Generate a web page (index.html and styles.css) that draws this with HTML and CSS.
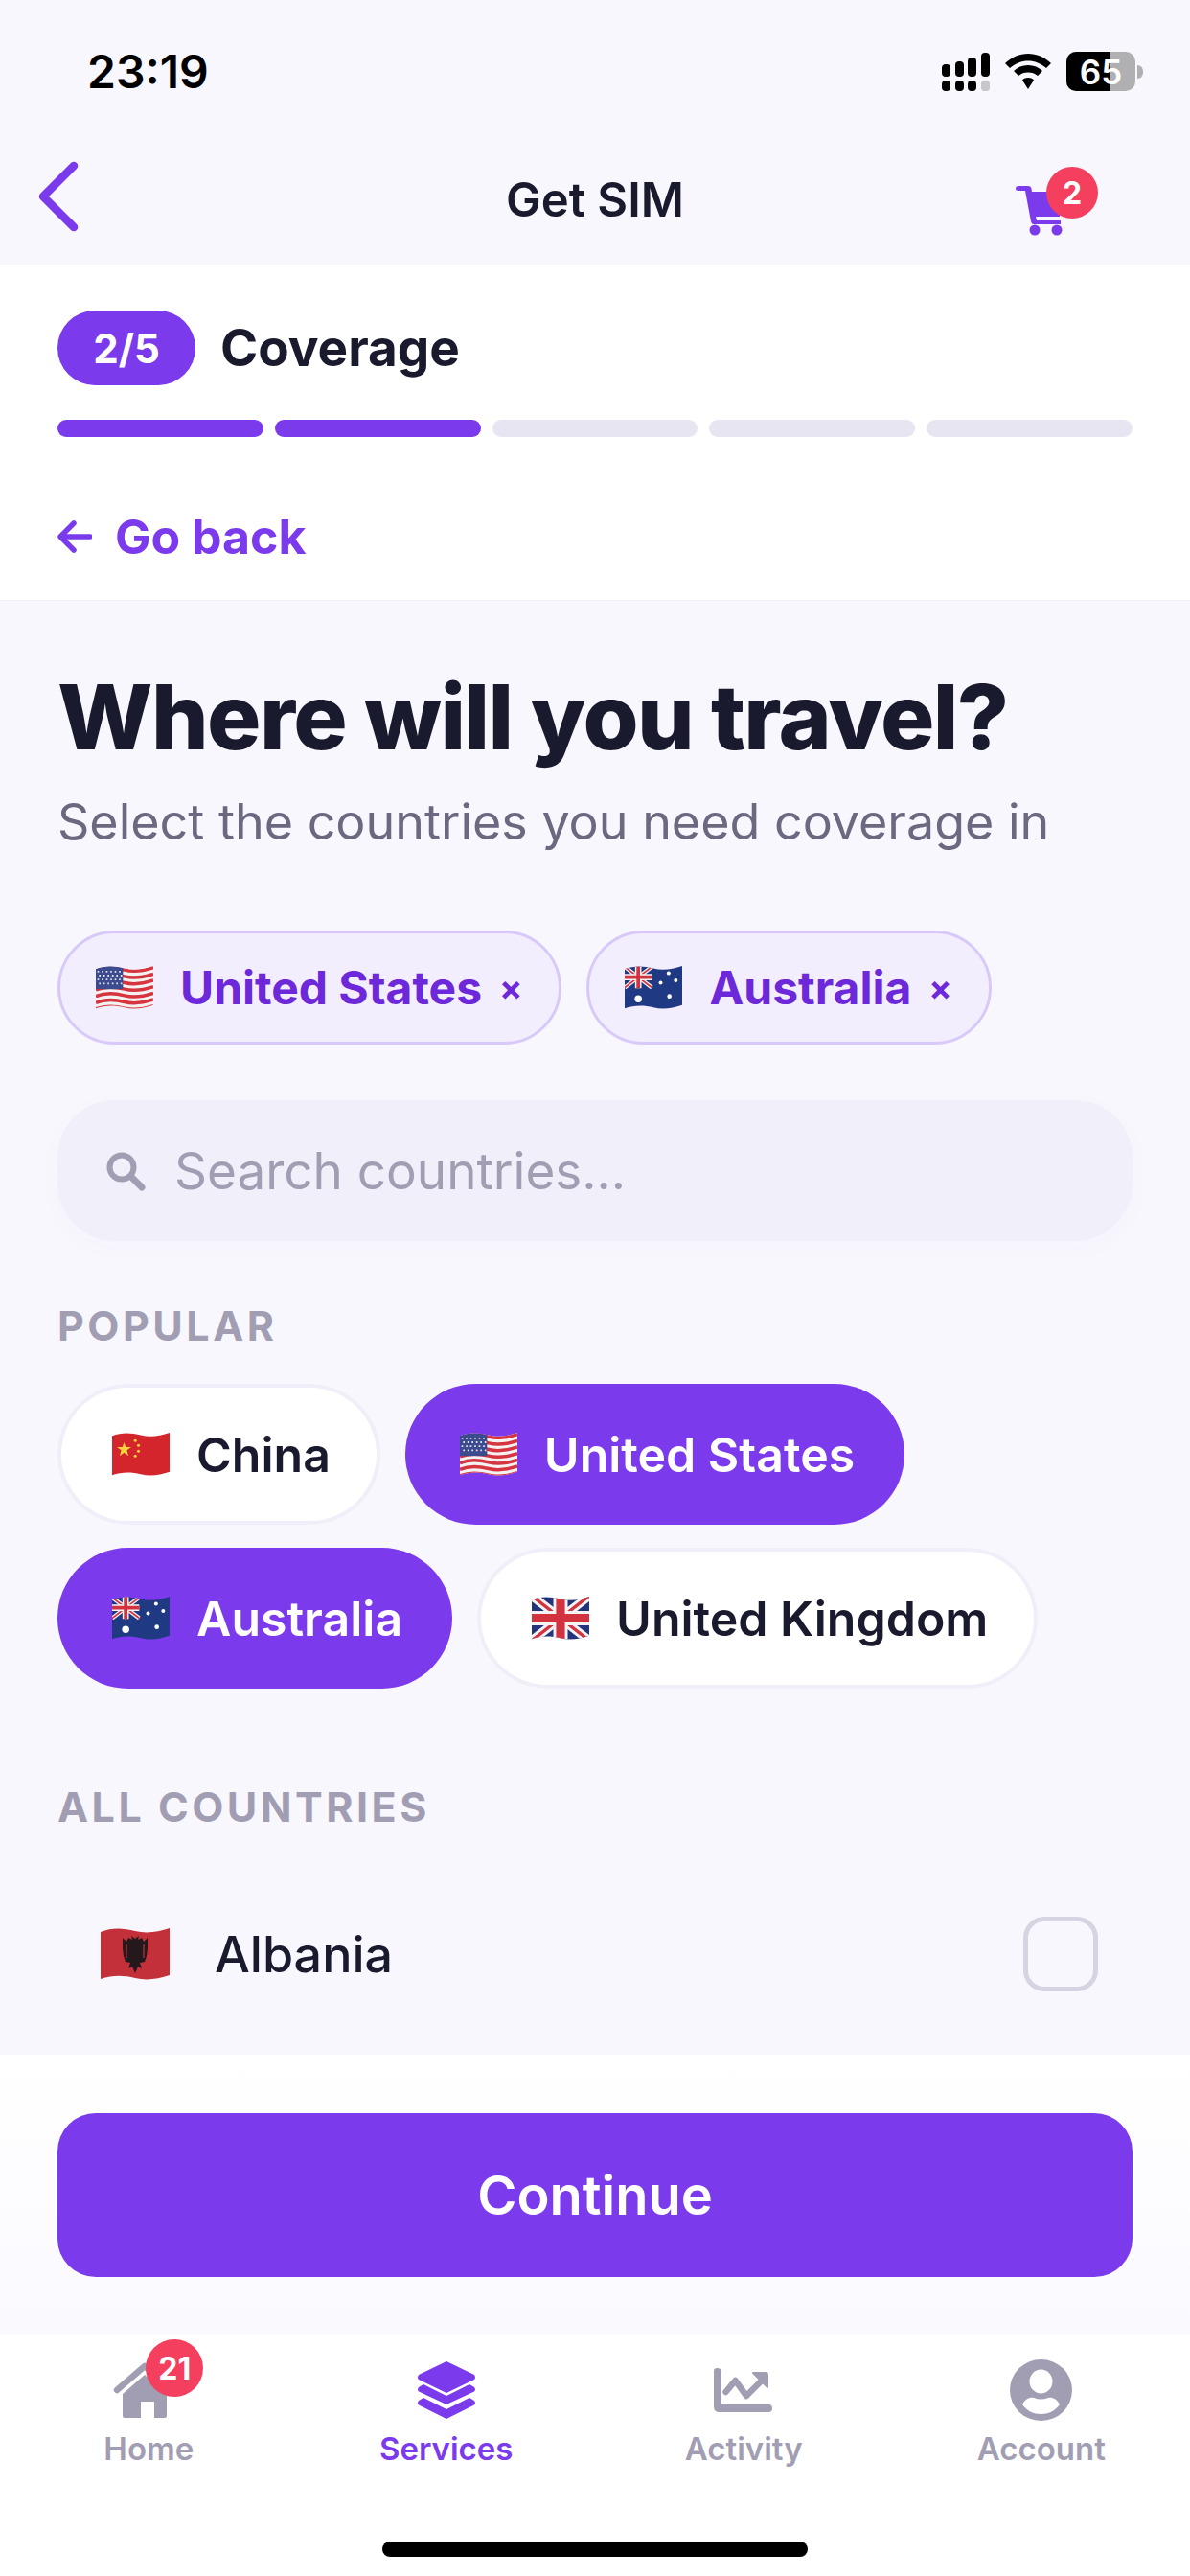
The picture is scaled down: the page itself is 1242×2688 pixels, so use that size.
FILE: index.html
```html
<!DOCTYPE html>
<html lang="en">

<head>
  <meta charset="UTF-8">
  <meta name="viewport" content="width=device-width, initial-scale=1.0">
  <title>Get SIM</title>
  <link rel="stylesheet" href="styles.css">
</head>

<body>
  <svg class="defs" width="0" height="0">
    <defs>
      <clipPath id="wave">
        <path d="M0 5 C12 0 24 1 36 4 C48 7 60 5 72 1 L72 50 C60 54 48 56 36 53 C24 50 12 50 0 54 Z"/>
      </clipPath>
      <symbol id="flag-us" viewBox="0 0 72 56">
        <g clip-path="url(#wave)">
          <rect width="72" height="56" fill="#f4f1f1"/>
          <g fill="none" stroke="#d6343f" stroke-width="4.2">
            <path d="M0 7 C12 2 24 3 36 6 C48 9 60 7 72 3"/>
            <path d="M0 15 C12 10 24 11 36 14 C48 17 60 15 72 11"/>
            <path d="M0 23 C12 18 24 19 36 22 C48 25 60 23 72 19"/>
            <path d="M0 31 C12 26 24 27 36 30 C48 33 60 31 72 27"/>
            <path d="M0 39 C12 34 24 35 36 38 C48 41 60 39 72 35"/>
            <path d="M0 47 C12 42 24 43 36 46 C48 49 60 47 72 43"/>
            <path d="M0 55 C12 50 24 51 36 54 C48 57 60 55 72 51"/>
          </g>
          <rect width="34" height="30" fill="#3c4a8e"/>
          <g fill="none" stroke="#dfe2f2" stroke-width="2.2" stroke-dasharray="2 3.4">
            <path d="M2 8 H33"/><path d="M4 13 H33"/><path d="M2 18 H33"/><path d="M4 23 H33"/>
          </g>
        </g>
      </symbol>
      <symbol id="flag-au" viewBox="0 0 72 56">
        <g clip-path="url(#wave)">
          <rect width="72" height="56" fill="#1f3a82"/>
          <g stroke="#f3f3f3" stroke-width="5">
            <path d="M0 2 L34 28"/><path d="M34 2 L0 28"/>
          </g>
          <g stroke="#d3323f" stroke-width="2">
            <path d="M0 2 L34 28"/><path d="M34 2 L0 28"/>
          </g>
          <path d="M17 0 V29 M0 15 H34" stroke="#f3f3f3" stroke-width="8"/>
          <path d="M17 0 V29 M0 15 H34" stroke="#d3323f" stroke-width="4.5"/>
          <g fill="#fff">
            <circle cx="17" cy="42" r="4.5"/>
            <circle cx="55" cy="10" r="2.4"/>
            <circle cx="45" cy="22" r="2.4"/>
            <circle cx="64" cy="19" r="2.4"/>
            <circle cx="56" cy="39" r="2.8"/>
          </g>
        </g>
      </symbol>
      <symbol id="flag-cn" viewBox="0 0 72 56">
        <g clip-path="url(#wave)">
          <rect width="72" height="56" fill="#d4252c"/>
          <g fill="#f6d53c">
            <path d="M15 13 L17 19 L24 19 L18.500 23 L20.500 30 L15 26 L9.500 30 L11.500 23 L6 19 L13 19 Z"/>
            <circle cx="29" cy="11" r="1.800"/>
            <circle cx="33" cy="17" r="1.800"/>
            <circle cx="33" cy="24" r="1.800"/>
            <circle cx="29" cy="30" r="1.800"/>
          </g>
        </g>
      </symbol>
      <symbol id="flag-gb" viewBox="0 0 72 56">
        <g clip-path="url(#wave)">
          <rect width="72" height="56" fill="#23337c"/>
          <path d="M0 0 L72 56 M72 0 L0 56" stroke="#f3f3f3" stroke-width="11"/>
          <path d="M0 0 L72 56 M72 0 L0 56" stroke="#d3323f" stroke-width="4"/>
          <path d="M36 0 V56 M0 28 H72" stroke="#f3f3f3" stroke-width="18"/>
          <path d="M36 0 V56 M0 28 H72" stroke="#d3323f" stroke-width="11"/>
        </g>
      </symbol>
      <symbol id="flag-al" viewBox="0 0 72 56">
        <g clip-path="url(#wave)">
          <rect width="72" height="56" fill="#c3303a"/>
          <path d="M36 48 L33 41 L29 43 L31 37 L26 36 L24 30 L23 22 L23 11 L27 15 L29 11 L33 13 L32 9 L36 12 L40 9 L39 13 L43 11 L45 15 L49 11 L49 22 L48 30 L46 36 L41 37 L43 43 L39 41 Z" fill="#23191c"/>
          <path d="M27 18 V32 M45 18 V32" stroke="#c3303a" stroke-width="1.2"/>
        </g>
      </symbol>
    </defs>
  </svg>

  <div class="phone">
    <div class="statusbar">
      <span class="clock">23:19</span>
      <div class="status-icons">
        <svg width="50" height="40" viewBox="0 0 50 40">
          <g fill="#000">
            <rect x="0" y="12" width="9" height="13" rx="4"/>
            <rect x="14" y="9" width="9" height="16" rx="4"/>
            <rect x="27" y="5" width="9" height="20" rx="4"/>
            <rect x="41" y="0" width="9" height="25" rx="4"/>
            <rect x="0" y="29" width="9" height="11" rx="4"/>
            <rect x="14" y="29" width="9" height="11" rx="4"/>
            <rect x="27" y="29" width="9" height="11" rx="4"/>
          </g>
          <rect x="41" y="29" width="9" height="11" rx="3.5" fill="#c8c8cc"/>
        </svg>
        <svg width="48" height="38" viewBox="0 0 48 38">
          <path d="M24 0 C33 0 41 3.500 48 10 L43 15 C37 10 31 7.500 24 7.500 C17 7.500 11 10 5 15 L0 10 C7 3.500 15 0 24 0 Z" fill="#000"/>
          <path d="M24 12 C30 12 35 14 39 18 L34 23 C31 20.500 28 19.500 24 19.500 C20 19.500 17 20.500 14 23 L9 18 C13 14 18 12 24 12 Z" fill="#000"/>
          <path d="M24 25 C27 25 29 26 30 27.500 L24 37 L18 27.500 C19 26 21 25 24 25 Z" fill="#000"/>
        </svg>
        <div class="battery">
          <div class="battery-body">
            <div class="battery-fill"></div>
            <span class="battery-num">65</span>
          </div>
          <div class="battery-tip"></div>
        </div>
      </div>
    </div>

    <div class="navbar">
      <svg class="nav-back" width="42" height="74" viewBox="0 0 42 74">
        <path d="M37 5 L5 37 L37 69" fill="none" stroke="#7c3aed" stroke-width="8.500" stroke-linecap="round" stroke-linejoin="round"/>
      </svg>
      <span class="nav-title">Get SIM</span>
      <div class="cart">
        <svg width="56" height="54" viewBox="0 0 56 54">
          <path d="M3 2 H13 Q16 2 16.500 5 L17 8 H52 L46 34 H21 L22 38 H47 V42 H19 Q16.500 42 16 39 L10 7 H3 Q0 7 0 4.500 Q0 2 3 2 Z" fill="#7c3aed"/>
          <circle cx="20" cy="48" r="5.500" fill="#7c3aed"/>
          <circle cx="43" cy="48" r="5.500" fill="#7c3aed"/>
        </svg>
        <span class="badge cart-badge">2</span>
      </div>
    </div>

    <div class="stepper">
      <div class="step-head">
        <span class="step-pill">2/5</span>
        <span class="step-name">Coverage</span>
      </div>
      <div class="step-bars">
        <div class="step-bar on"></div>
        <div class="step-bar on"></div>
        <div class="step-bar"></div>
        <div class="step-bar"></div>
        <div class="step-bar"></div>
      </div>
      <div class="go-back">
        <svg width="36" height="34" viewBox="0 0 36 34">
          <path d="M34 17 H4 M17 3 L3 17 L17 31" fill="none" stroke="#7c3aed" stroke-width="5.500" stroke-linecap="round" stroke-linejoin="round"/>
        </svg>
        <span>Go back</span>
      </div>
    </div>

    <div class="content">
      <h1>Where will you travel?</h1>
      <p class="subtitle">Select the countries you need coverage in</p>

      <div class="picked">
        <div class="pick">
          <svg class="flag-sm" viewBox="0 0 72 56"><use href="#flag-us"/></svg>
          <span>United States</span>
          <span class="pick-x">×</span>
        </div>
        <div class="pick">
          <svg class="flag-sm" viewBox="0 0 72 56"><use href="#flag-au"/></svg>
          <span>Australia</span>
          <span class="pick-x">×</span>
        </div>
      </div>

      <div class="search">
        <svg width="42" height="42" viewBox="0 0 42 42">
          <circle cx="17" cy="17" r="12.500" fill="none" stroke="#a19eb3" stroke-width="6"/>
          <path d="M27 27 L38 38" stroke="#a19eb3" stroke-width="7" stroke-linecap="round"/>
        </svg>
        <span>Search countries...</span>
      </div>

      <div class="section-label">POPULAR</div>
      <div class="popular">
        <div class="chip">
          <svg class="flag-sm" viewBox="0 0 72 56"><use href="#flag-cn"/></svg>
          <span>China</span>
        </div>
        <div class="chip on">
          <svg class="flag-sm" viewBox="0 0 72 56"><use href="#flag-us"/></svg>
          <span>United States</span>
        </div>
        <div class="chip on">
          <svg class="flag-sm" viewBox="0 0 72 56"><use href="#flag-au"/></svg>
          <span>Australia</span>
        </div>
        <div class="chip">
          <svg class="flag-sm" viewBox="0 0 72 56"><use href="#flag-gb"/></svg>
          <span>United Kingdom</span>
        </div>
      </div>

      <div class="section-label all">ALL COUNTRIES</div>
      <div class="country-row">
        <svg class="flag-lg" viewBox="0 0 72 56"><use href="#flag-al"/></svg>
        <span class="country-name">Albania</span>
        <div class="checkbox"></div>
      </div>
    </div>

    <div class="footer">
      <div class="continue">Continue</div>
    </div>

    <div class="tabbar">
      <div class="tab">
        <div class="tab-icon">
          <svg class="house" width="66" height="58" viewBox="0 0 66 58">
            <path d="M4 29 L33 4 L62 29" fill="none" stroke="#a19eb3" stroke-width="6.500" stroke-linecap="round" stroke-linejoin="round"/>
            <path d="M33 13 L56 33 V56 Q56 58 54 58 H43 V41 H29 V58 H12 Q10 58 10 56 V33 Z" fill="#a19eb3"/>
          </svg>
          <span class="badge home-badge">21</span>
        </div>
        <span>Home</span>
      </div>
      <div class="tab active">
        <div class="tab-icon">
          <svg width="62" height="60" viewBox="0 0 62 60">
            <path d="M31 0 L60 14 Q62 17 60 19 L31 33 L2 19 Q0 17 2 14 Z" fill="#7c3aed"/>
            <path d="M7 24 L31 36 L55 24 L60 27 Q62 29.500 60 31.500 L31 45 L2 31.500 Q0 29.500 2 27 Z" fill="#7c3aed"/>
            <path d="M7 38 L31 50 L55 38 L60 41 Q62 43.500 60 45.500 L31 60 L2 45.500 Q0 43.500 2 41 Z" fill="#7c3aed"/>
          </svg>
        </div>
        <span>Services</span>
      </div>
      <div class="tab">
        <div class="tab-icon">
          <svg width="62" height="46" viewBox="0 0 62 46">
            <path d="M0 3 Q0 0 3.500 0 Q7.500 0 7.500 3 V36 Q7.500 38 9.500 38 H57 Q61 38 61 42 Q61 46 57 46 H6 Q0 46 0 40 Z" fill="#a19eb3"/>
            <path d="M12.500 25 L22.500 13 L34 29 L50 13" fill="none" stroke="#a19eb3" stroke-width="6.500" stroke-linejoin="round" stroke-linecap="round"/>
            <path d="M41 5 H54 Q56 5 56 7 V20 Z" fill="#a19eb3" stroke="#a19eb3" stroke-width="2" stroke-linejoin="round"/>
          </svg>
        </div>
        <span>Activity</span>
      </div>
      <div class="tab">
        <div class="tab-icon">
          <svg width="65" height="64" viewBox="0 0 65 64">
            <ellipse cx="32.500" cy="32" rx="32.500" ry="32" fill="#a19eb3"/>
            <ellipse cx="32.500" cy="23" rx="12" ry="12.500" fill="#fff"/>
            <path d="M13 47 C16 41 21 39 25 40 Q32.500 43 40 40 C44 39 49 41 52 47 C47 54 40 57 32.500 57 C25 57 18 54 13 47 Z" fill="#fff"/>
          </svg>
        </div>
        <span>Account</span>
      </div>
    </div>

    <div class="home-bar">
      <div class="home-indicator"></div>
    </div>
  </div>
</body>

</html>
```

FILE: styles.css
```css
* {
  box-sizing: border-box;
}

body {
  margin: 0;
  padding: 0;
  font-family: Inter, "Liberation Sans", sans-serif;
  background-color: #f8f7fd;
  color: #1a1a2e;
}

.defs {
  position: absolute;
}

.phone {
  width: 1242px;
  height: 2688px;
  display: flex;
  flex-direction: column;
  overflow: hidden;
}

/* status bar */
.statusbar {
  height: 140px;
  padding: 48px 49px 0 91px;
  display: flex;
  justify-content: space-between;
  align-items: flex-start;
}

.clock {
  font-size: 48px;
  line-height: 54px;
  font-weight: 600;
  color: #000;
}

.status-icons {
  display: flex;
  align-items: center;
  gap: 16px;
  padding-top: 6px;
}

.battery {
  display: flex;
  align-items: center;
  gap: 2px;
}

.battery-body {
  position: relative;
  width: 72px;
  height: 41px;
  border-radius: 10px;
  background: #b0b0b3;
  overflow: hidden;
  display: flex;
  align-items: center;
  justify-content: center;
}

.battery-fill {
  position: absolute;
  left: 0;
  top: 0;
  bottom: 0;
  width: 46px;
  background: #000;
}

.battery-num {
  position: relative;
  font-size: 35px;
  font-weight: 600;
  color: #fff;
}

.battery-tip {
  width: 6px;
  height: 14px;
  border-radius: 0 6px 6px 0;
  background: #b0b0b3;
}

/* nav */
.navbar {
  height: 136px;
  padding: 0 40px;
  display: grid;
  grid-template-columns: 1fr auto 1fr;
  align-items: center;
}

.nav-back {
  margin-top: -6px;
}

.nav-title {
  font-size: 49px;
  font-weight: 600;
}

.cart {
  position: relative;
  justify-self: end;
  width: 56px;
  height: 54px;
  margin-right: 86px;
  margin-top: 22px;
}

.badge {
  position: absolute;
  display: flex;
  align-items: center;
  justify-content: center;
  border-radius: 50%;
  background: #f43f5e;
  color: #fff;
  font-weight: 700;
}

.cart-badge {
  width: 54px;
  height: 54px;
  top: -18px;
  left: 32px;
  font-size: 32px;
}

/* stepper */
.stepper {
  height: 351px;
  background: #fff;
  padding: 48px 60px 0;
  border-bottom: 1px solid #f0eef8;
}

.step-head {
  display: flex;
  align-items: center;
  gap: 26px;
}

.step-pill {
  width: 144px;
  height: 78px;
  border-radius: 39px;
  background: #7c3aed;
  color: #fff;
  font-size: 42px;
  font-weight: 700;
  display: flex;
  align-items: center;
  justify-content: center;
}

.step-name {
  font-size: 53px;
  font-weight: 700;
}

.step-bars {
  display: flex;
  gap: 12px;
  margin-top: 36px;
}

.step-bar {
  flex: 1;
  height: 18px;
  border-radius: 9px;
  background: #e8e5f2;
}

.step-bar.on {
  background: #7c3aed;
}

.go-back {
  display: flex;
  align-items: center;
  gap: 24px;
  margin-top: 74px;
  color: #7c3aed;
  font-size: 50px;
  line-height: 60px;
  font-weight: 700;
}

/* main */
.content {
  flex: 1;
  padding: 0 60px;
  min-height: 0;
}

h1 {
  margin: 65px 0 0;
  font-size: 94px;
  line-height: 112px;
  font-weight: 800;
  letter-spacing: -1.6px;
}

.subtitle {
  margin: 24px 0 0;
  font-size: 52px;
  line-height: 60px;
  color: #6b6880;
}

.picked {
  display: flex;
  gap: 26px;
  margin-top: 83px;
}

.pick {
  height: 119px;
  padding: 0 38px 0 37px;
  display: flex;
  align-items: center;
  gap: 28px;
  border: 3px solid #d9c9f9;
  border-radius: 60px;
  background: #f3eefe;
  color: #6d28d9;
  font-size: 48px;
  font-weight: 700;
}

.pick-x {
  margin-left: -10px;
  font-size: 36px;
}

.flag-sm {
  width: 60px;
  height: 47px;
  flex: none;
}

.search {
  height: 147px;
  margin-top: 58px;
  padding: 0 50px;
  display: flex;
  align-items: center;
  gap: 30px;
  border-radius: 60px;
  background: #f1eff9;
  box-shadow: 0 6px 30px rgba(124, 58, 237, 0.02);
  color: #a19eb3;
  font-size: 53px;
}

.section-label {
  margin-top: 63px;
  font-size: 43px;
  line-height: 50px;
  font-weight: 700;
  letter-spacing: 3.5px;
  color: #a19eb3;
}

.popular {
  display: flex;
  flex-wrap: wrap;
  gap: 24px 26px;
  margin-top: 36px;
  width: 1122px;
}

.chip {
  height: 147px;
  padding: 0 52px 0 57px;
  display: flex;
  align-items: center;
  gap: 28px;
  border-radius: 74px;
  background: #fff;
  box-shadow: inset 0 0 0 4px #f0eef8;
  font-size: 50px;
  font-weight: 600;
}

.chip.on {
  background: #7c3aed;
  box-shadow: none;
  color: #fff;
}

.section-label.all {
  margin-top: 98px;
}

.country-row {
  height: 120px;
  margin-top: 69px;
  padding: 0 36px 0 45px;
  display: flex;
  align-items: center;
}

.flag-lg {
  width: 72px;
  height: 56px;
  flex: none;
}

.country-name {
  flex: 1;
  margin-left: 47px;
  font-size: 52px;
  font-weight: 500;
}

.checkbox {
  width: 78px;
  height: 78px;
  border: 5px solid #d6d4e2;
  border-radius: 22px;
}

/* footer */
.footer {
  height: 292px;
  background: linear-gradient(#fff, #faf9fe);
  padding: 61px 60px 0;
}

.continue {
  height: 171px;
  border-radius: 40px;
  background: #7c3aed;
  color: #fff;
  font-size: 56px;
  font-weight: 600;
  display: flex;
  align-items: center;
  justify-content: center;
}

/* tabs */
.tabbar {
  height: 166px;
  background: #fff;
  display: flex;
}

.tab {
  flex: 1;
  display: flex;
  flex-direction: column;
  align-items: center;
  color: #a19eb3;
  font-size: 33px;
  font-weight: 600;
}

.tab.active {
  color: #7c3aed;
}

.tab-icon {
  position: relative;
  height: 90px;
  padding-top: 26px;
  display: flex;
  align-items: center;
  justify-content: center;
  margin-bottom: 9px;
}

.house {
  margin-right: 8px;
}

.home-badge {
  width: 60px;
  height: 60px;
  top: 5px;
  left: 34px;
  font-size: 32px;
}

.home-bar {
  height: 86px;
  background: #fff;
  display: flex;
  justify-content: center;
  padding-top: 50px;
}

.home-indicator {
  width: 444px;
  height: 16px;
  border-radius: 8px;
  background: #000;
}
```
